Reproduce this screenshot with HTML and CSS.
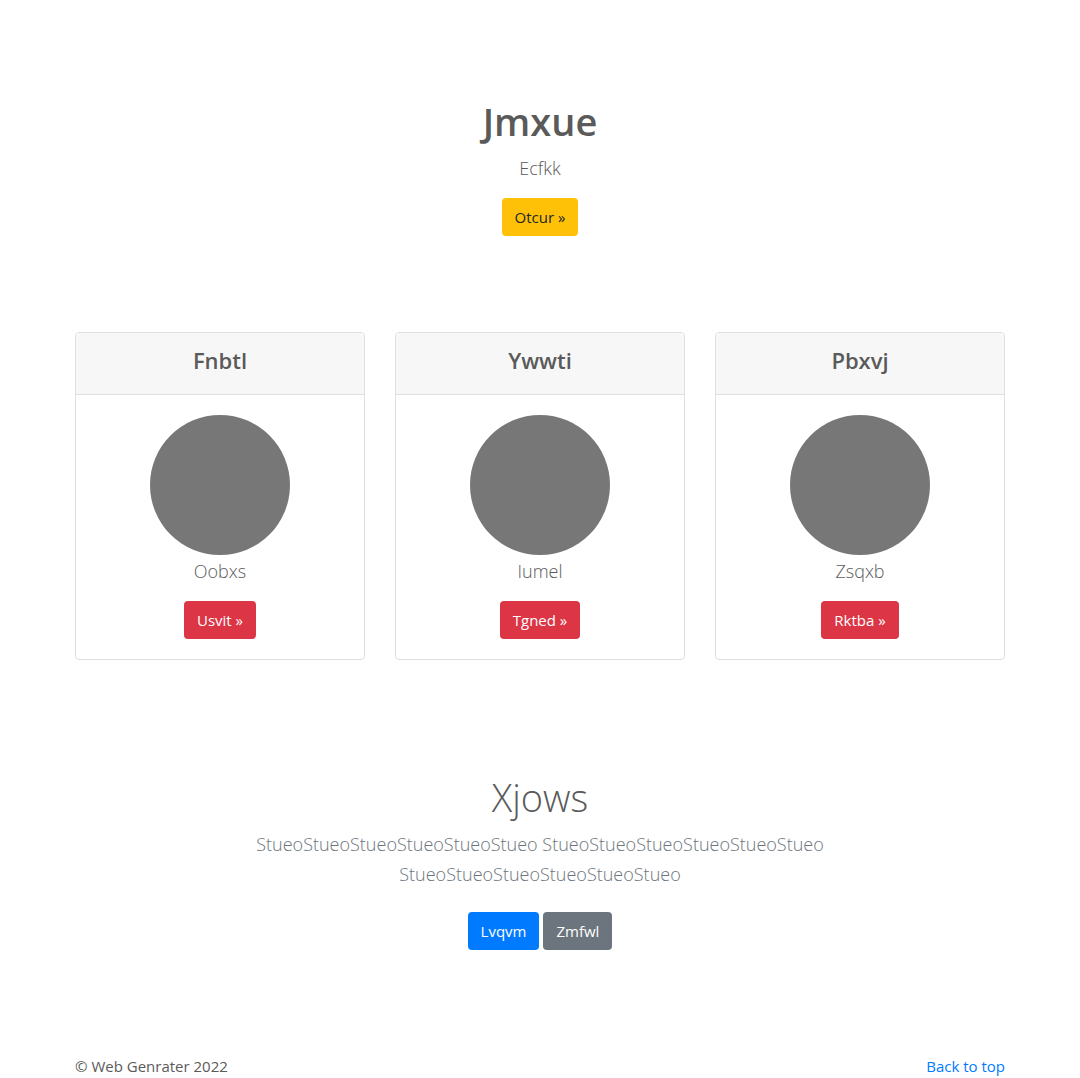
FILE: index.html
```html
<!DOCTYPE html>
<html lang="en">
<head>
<meta charset="utf-8">
<meta name="viewport" content="width=device-width, initial-scale=1">
<title>Jmxue</title>
<link rel="stylesheet" href="styles.css">
</head>
<body id="top">
<main>
  <section class="hero">
    <h1 class="hero-title">Jmxue</h1>
    <p class="lead">Ecfkk</p>
    <button type="button" class="btn btn-warning">Otcur »</button>
  </section>
  <section class="container cards">
    <article class="card">
      <header class="card-header"><h2 class="card-title">Fnbtl</h2></header>
      <div class="card-body">
        <div class="avatar"></div>
        <p class="lead">Oobxs</p>
        <button type="button" class="btn btn-danger">Usvit »</button>
      </div>
    </article>
    <article class="card">
      <header class="card-header"><h2 class="card-title">Ywwti</h2></header>
      <div class="card-body">
        <div class="avatar"></div>
        <p class="lead">Iumel</p>
        <button type="button" class="btn btn-danger">Tgned »</button>
      </div>
    </article>
    <article class="card">
      <header class="card-header"><h2 class="card-title">Pbxvj</h2></header>
      <div class="card-body">
        <div class="avatar"></div>
        <p class="lead">Zsqxb</p>
        <button type="button" class="btn btn-danger">Rktba »</button>
      </div>
    </article>
  </section>
  <section class="about">
    <h2 class="about-title">Xjows</h2>
    <p class="lead">StueoStueoStueoStueoStueoStueo StueoStueoStueoStueoStueoStueo StueoStueoStueoStueoStueoStueo</p>
    <div class="actions">
      <button type="button" class="btn btn-primary">Lvqvm</button>
      <button type="button" class="btn btn-secondary">Zmfwl</button>
    </div>
  </section>
</main>
<footer class="container footer">
  <span>© Web Genrater 2022</span>
  <a href="#top">Back to top</a>
</footer>
</body>
</html>
```
FILE: styles.css
```css
*, *::before, *::after { box-sizing: border-box; }

body {
  margin: 0;
  font-family: "Segoe UI", "Open Sans", "Noto Sans", sans-serif;
  font-size: 15px;
  line-height: 24px;
  color: #5a5a5a;
  background: #fff;
}

h1, h2, p { margin: 0; }

.container {
  max-width: 960px;
  margin: 0 auto;
  padding: 0 15px;
}

.hero, .about, .card { text-align: center; }
.hero { padding: 96px 15px; }

.hero-title,
.about-title {
  margin-bottom: 6px;
  font-size: 38px;
  line-height: 50px;
}
.hero-title { font-weight: 600; }
.about-title { font-weight: 300; }

.lead {
  margin-bottom: 15px;
  padding-top: 1px;
  font-size: 18px;
  font-weight: 300;
  line-height: 30px;
}

.btn {
  height: 38px;
  padding: 0 13px;
  border: 0;
  border-radius: 4px;
  font: inherit;
  color: #fff;
  cursor: pointer;
}
.btn-warning { background: #ffc107; color: #212529; }
.btn-danger { background: #dc3545; }
.btn-primary { background: #007bff; }
.btn-secondary { background: #6c757d; }

.cards {
  display: grid;
  grid-template-columns: repeat(auto-fit, minmax(240px, 1fr));
  gap: 30px;
}
.card { border: 1px solid #dfdfdf; border-radius: 4px; }
.card-header {
  padding: 12px 20px 18px;
  border-bottom: 1px solid #dfdfdf;
  border-radius: 3px 3px 0 0;
  background: #f7f7f7;
}
.card-title { font-size: 22px; font-weight: 600; line-height: 31px; }
.card-body { padding: 20px; }
.avatar {
  width: 140px;
  height: 140px;
  margin: 0 auto;
  border-radius: 50%;
  background: #777;
}

.about {
  max-width: 640px;
  margin: 0 auto;
  padding: 112px 15px 104px;
}
.about .lead { margin-bottom: 23px; color: #6c757d; }
.actions { display: flex; justify-content: center; gap: 4px; }

.footer { display: flex; justify-content: space-between; }
.footer a { color: #007bff; text-decoration: none; }
```
